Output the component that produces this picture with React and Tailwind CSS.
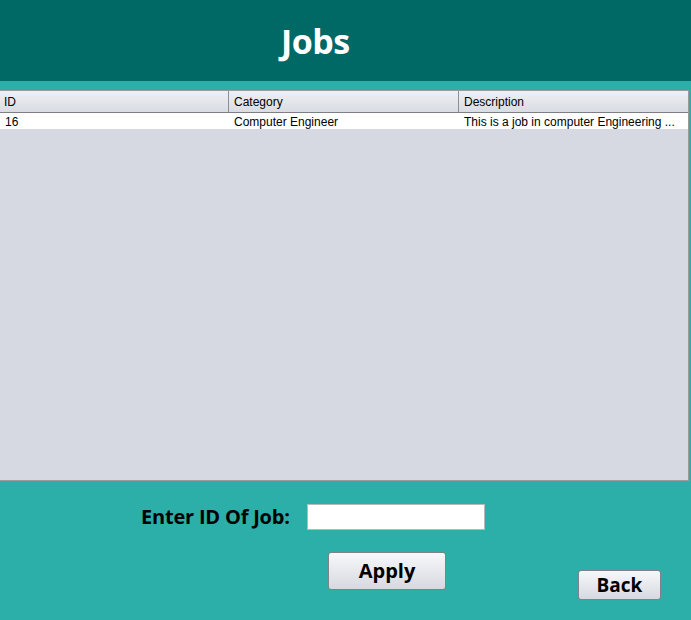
export default function App() {
  const rows = [
    { id: '16', category: 'Computer Engineer', description: 'This is a job in computer Engineering ...' },
  ]

  return (
    <div className="w-[691px] h-[620px] bg-[#2cafa8] flex flex-col overflow-hidden">
      {/* Title bar */}
      <div className="h-[81px] bg-[#006966] flex items-center pl-[281px]">
        <h1 className="text-white font-bold text-[34px] leading-none font-['Open_Sans',sans-serif] tracking-[-0.5px]">
          Jobs
        </h1>
      </div>

      {/* Table */}
      <div className="mt-[9px] w-[689px] h-[391px] bg-[#d6d9e1] border-y border-r border-[#9b9b9b] font-['Liberation_Sans',Arial,sans-serif] text-[12px] text-black">
        <div className="grid grid-cols-[229px_230px_1fr] h-[22px] bg-gradient-to-b from-[#eef0f3] to-[#d9dce3] border-b border-[#7d7f84]">
          <div className="px-[4px] flex items-center border-r border-[#8d8f94]">ID</div>
          <div className="px-[5px] flex items-center border-r border-[#8d8f94]">Category</div>
          <div className="px-[5px] flex items-center">Description</div>
        </div>
        {rows.map((r) => (
          <div key={r.id} className="grid grid-cols-[229px_230px_1fr] h-[16px] bg-white">
            <div className="px-[5px] flex items-center">{r.id}</div>
            <div className="px-[5px] flex items-center">{r.category}</div>
            <div className="px-[5px] flex items-center whitespace-nowrap overflow-hidden">{r.description}</div>
          </div>
        ))}
      </div>

      {/* Form */}
      <div className="flex items-center pl-[141px] mt-[23px] font-['Open_Sans',sans-serif]">
        <label className="text-[20px] font-bold text-black w-[166px] leading-none tracking-[-0.2px]">Enter ID Of Job:</label>
        <input className="w-[178px] h-[26px] bg-white border border-[#b9b9b9] outline-none px-1 text-[13px]" />
      </div>

      <div className="flex items-start pl-[328px] mt-[22px] font-['Open_Sans',sans-serif]">
        <button className="w-[118px] h-[38px] rounded-[3px] border border-[#7f8388] bg-gradient-to-b from-[#f7f8fa] to-[#d6d9e0] text-[20px] font-bold text-black leading-none">
          Apply
        </button>
        <button className="ml-[132px] mt-[18px] w-[83px] h-[30px] rounded-[3px] border border-[#7f8388] bg-gradient-to-b from-[#f7f8fa] to-[#d6d9e0] text-[19px] font-bold text-black leading-none">
          Back
        </button>
      </div>
    </div>
  )
}
